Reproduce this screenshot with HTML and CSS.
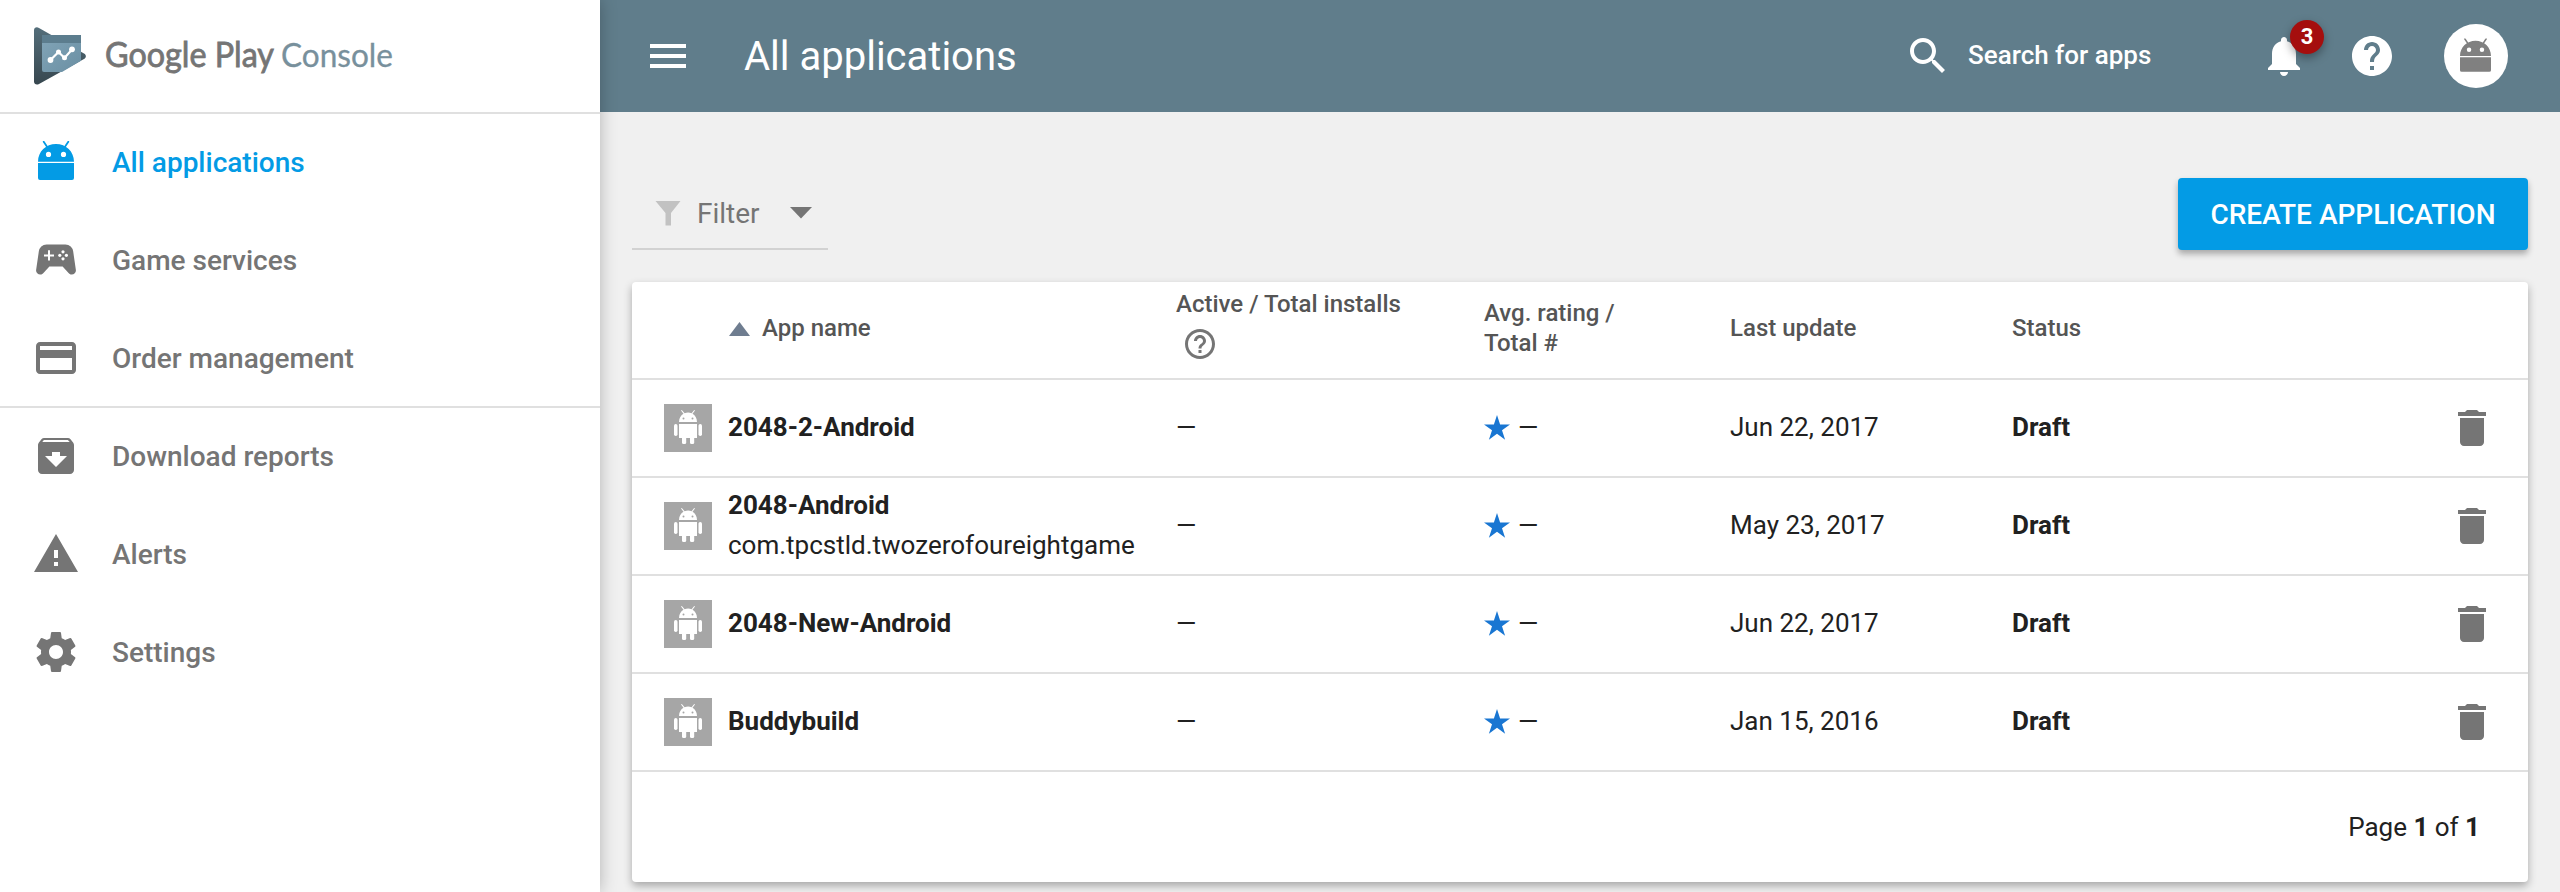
FILE: index.html
```html
<!DOCTYPE html>
<html lang="en">
<head>
<meta charset="utf-8">
<title>All applications - Google Play Console</title>
<link rel="stylesheet" href="styles.css">
</head>
<body>
<svg class="sprite" aria-hidden="true">
  <symbol id="i-trash" viewBox="0 0 24 24"><path d="M6 19c0 1.1.9 2 2 2h8c1.1 0 2-.9 2-2V7H6v12zM19 4h-3.5l-1-1h-5l-1 1H5v2h14V4z"/></symbol>
  <symbol id="i-star" viewBox="0 0 26 25"><path d="M13 0l3.1 9.4H26l-8 5.8 3.1 9.6-8.1-6-8.1 6L8 15.200 0 9.400h9.900z"/></symbol>
  <symbol id="i-head" viewBox="0 0 36 40"><path class="antenna" d="M5.700.8l4 6M30.300.8l-4 6"/><path fill-rule="evenodd" d="M0 20.700C0 10.500 8 3 18 3s18 7.500 18 17.700zM10.500 10.800a2.600 2.600 0 1 0 0 5.200 2.600 2.600 0 0 0 0-5.200zm15 0a2.600 2.600 0 1 0 0 5.200 2.600 2.600 0 0 0 0-5.200zM0 22h36v15a2 2 0 0 1-2 2H2a2 2 0 0 1-2-2z"/></symbol>
  <symbol id="i-robot" viewBox="0 0 48 48"><path d="M15 18c0-4 2-6.800 4.500-8.200L17 6.500l.8-.5 2.800 3.200a10 10 0 0 1 7 0L30.200 6l.8.5-2.500 3.300C31 11.200 33 14 33 18zM15 20h18v14H15z"/><rect x="10" y="20" width="3.500" height="12" rx="1.700"/><rect x="34.500" y="20" width="3.500" height="12" rx="1.700"/><rect x="18" y="32" width="4.200" height="8" rx="1.500"/><rect x="26" y="32" width="4.200" height="8" rx="1.500"/><circle class="robot-eye" cx="19.500" cy="14.500" r="1"/><circle class="robot-eye" cx="28.500" cy="14.500" r="1"/></symbol>
</svg>
<div class="app">
  <aside class="sidebar">
    <div class="brand">
      <svg class="brand-logo" viewBox="0 0 52 58">
        <defs>
          <linearGradient id="lg1" x1="0" y1="0" x2="0" y2="1"><stop offset="0" stop-color="#546e7a"/><stop offset="1" stop-color="#37474f"/></linearGradient>
          <linearGradient id="lg2" x1="0" y1="0" x2="1" y2="1"><stop offset="0" stop-color="#82a5b8"/><stop offset="1" stop-color="#6a8fa3"/></linearGradient>
        </defs>
        <path fill="url(#lg1)" d="M0 3.500C0 .8 2.500-.6 5 1l45 25.500c2.500 1.500 2.500 4 0 5.500L5 57c-2.500 1.500-5 0-5-2.500z"/>
        <path fill="url(#lg2)" d="M8 8h39v25.700L28 45H10a2 2 0 0 1-2-2z"/>
        <path fill="#5c7d8e" d="M8 8h39v8H8z"/>
        <path fill="none" stroke="#fff" stroke-width="2.200" d="M16.500 33l8-8 6 6 7.500-8.500"/>
        <g fill="#fff"><circle cx="16.500" cy="33" r="2.900"/><circle cx="24.500" cy="25" r="2.500"/><circle cx="30.500" cy="30.800" r="2.500"/><circle cx="38" cy="22.300" r="2.900"/></g>
      </svg>
      <svg class="brand-name" viewBox="0 0 300 48">
        <text class="brand-google" x="0" y="35" textLength="169" lengthAdjust="spacingAndGlyphs">Google Play</text>
        <text class="brand-console" x="176" y="35" textLength="112" lengthAdjust="spacingAndGlyphs">Console</text>
      </svg>
    </div>
    <nav class="nav">
      <a class="nav-item nav-active"><span class="icon"><svg class="head-icon" viewBox="0 0 36 40"><use href="#i-head"/></svg></span>All applications</a>
      <a class="nav-item"><svg class="icon" viewBox="0 0 24 24"><path d="M21.960 17.100 20.600 7.800A3.900 3.900 0 0 0 16.700 4.200H7.300A3.900 3.900 0 0 0 3.400 7.800L2.040 17.100A2.100 2.100 0 0 0 4.200 19.300c.6 0 1-.3 1.400-.7L8.700 15.200h6.600l3.100 3.400c.4.4.8.7 1.400.7a2.100 2.100 0 0 0 2.160-2.200z"/><path fill="#fff" d="M11 10.200H9v2.100H8v-2.100H6v-1h2V7.100h1v2.100h2z"/><g fill="#fff"><circle cx="15.500" cy="7.900" r=".8"/><circle cx="15.500" cy="11.400" r=".8"/><circle cx="13.900" cy="9.650" r=".8"/><circle cx="17.200" cy="9.650" r=".8"/></g></svg>Game services</a>
      <a class="nav-item nav-divided"><svg class="icon" viewBox="0 0 24 24"><path d="M20 4H4c-1.110 0-1.990.89-1.990 2L2 18c0 1.110.89 2 2 2h16c1.110 0 2-.89 2-2V6c0-1.110-.89-2-2-2zm0 14H4v-6h16v6zm0-10H4V6h16v2z"/></svg>Order management</a>
      <a class="nav-item"><svg class="icon" viewBox="0 0 24 24"><path d="M20.540 5.230l-1.390-1.680C18.880 3.210 18.470 3 18 3H6c-.47 0-.88.21-1.160.55L3.460 5.230C3.170 5.570 3 6.020 3 6.500V19c0 1.100.9 2 2 2h14c1.100 0 2-.9 2-2V6.500c0-.48-.17-.93-.46-1.270zM12 17.500L6.500 12H10v-2h4v2h3.500L12 17.500zM5.120 5l.81-1h12l.94 1H5.120z"/></svg>Download reports</a>
      <a class="nav-item"><svg class="icon" viewBox="0 0 24 24"><path d="M1 21h22L12 2 1 21zm12-3h-2v-2h2v2zm0-4h-2v-4h2v4z"/></svg>Alerts</a>
      <a class="nav-item"><svg class="icon" viewBox="0 0 24 24"><path d="M19.430 12.980c.04-.32.07-.64.07-.98s-.03-.66-.07-.98l2.110-1.650c.19-.15.24-.42.12-.64l-2-3.460c-.12-.22-.39-.3-.61-.22l-2.490 1c-.52-.4-1.080-.73-1.690-.98l-.38-2.650C14.460 2.180 14.250 2 14 2h-4c-.25 0-.46.18-.49.42l-.38 2.650c-.61.25-1.170.59-1.690.98l-2.490-1c-.23-.09-.49 0-.61.22l-2 3.460c-.13.22-.07.49.12.64l2.110 1.650c-.04.32-.07.65-.07.98s.03.66.07.98l-2.110 1.650c-.19.15-.24.42-.12.64l2 3.460c.12.22.39.3.61.22l2.490-1c.52.4 1.080.73 1.690.98l.38 2.650c.03.24.24.42.49.42h4c.25 0 .46-.18.49-.42l.38-2.650c.61-.25 1.170-.59 1.690-.98l2.490 1c.23.09.49 0 .61-.22l2-3.460c.12-.22.07-.49-.12-.64l-2.110-1.650zM12 15.500c-1.930 0-3.500-1.570-3.500-3.500s1.570-3.500 3.500-3.500 3.500 1.570 3.500 3.500-1.570 3.500-3.500 3.500z"/></svg>Settings</a>
    </nav>
  </aside>
  <main class="main">
    <header class="topbar">
      <svg class="icon menu" viewBox="0 0 24 24"><path d="M3 18h18v-2H3v2zm0-5h18v-2H3v2zm0-7v2h18V6H3z"/></svg>
      <h1 class="title">All applications</h1>
      <div class="search">
        <svg class="icon" viewBox="0 0 24 24"><path d="M15.500 14h-.79l-.28-.27C15.410 12.590 16 11.110 16 9.500 16 5.910 13.090 3 9.500 3S3 5.910 3 9.500 5.910 16 9.500 16c1.610 0 3.090-.59 4.230-1.570l.27.28v.79l5 4.990L20.490 19l-4.990-5zm-6 0C7.010 14 5 11.990 5 9.500S7.010 5 9.500 5 14 7.010 14 9.500 11.990 14 9.500 14z"/></svg>
        <span class="search-label">Search for apps</span>
      </div>
      <div class="bell">
        <svg class="icon" viewBox="0 0 24 24"><path d="M12 22c1.100 0 2-.9 2-2h-4c0 1.100.89 2 2 2zm6-6v-5c0-3.070-1.640-5.640-4.500-6.320V4c0-.83-.67-1.500-1.500-1.500s-1.500.67-1.500 1.500v.68C7.630 5.360 6 7.920 6 11v5l-2 2v1h16v-1l-2-2z"/></svg>
        <span class="badge">3</span>
      </div>
      <svg class="icon help" viewBox="0 0 24 24"><path d="M12 2C6.480 2 2 6.480 2 12s4.480 10 10 10 10-4.480 10-10S17.520 2 12 2zm1 17h-2v-2h2v2zm2.070-7.750l-.9.920C13.450 12.900 13 13.500 13 15h-2v-.5c0-1.100.45-2.100 1.170-2.830l1.240-1.260c.37-.36.59-.86.59-1.410 0-1.100-.9-2-2-2s-2 .9-2 2H8c0-2.210 1.790-4 4-4s4 1.790 4 4c0 .88-.36 1.680-.93 2.250z"/></svg>
      <span class="avatar"><svg class="avatar-icon" viewBox="0 0 36 40"><use href="#i-head"/></svg></span>
    </header>
    <section class="content">
      <div class="toolbar">
        <div class="filter">
          <svg class="funnel" viewBox="0 0 26 26"><path d="M.5 1h25L16 13v12.500h-5.500V13z"/></svg>
          <span>Filter</span>
          <svg class="caret" viewBox="0 0 22 12"><path d="M0 0h22L11 11.500z"/></svg>
        </div>
        <button class="create">CREATE APPLICATION</button>
      </div>
      <div class="card">
        <div class="row head">
          <div class="cell c-name"><svg class="sort" viewBox="0 0 22 14"><path d="M1 14h21L11.500 0z"/></svg>App name</div>
          <div class="cell installs-head"><span>Active / Total installs</span>
            <svg class="help-outline" viewBox="0 0 24 24"><path d="M11 18h2v-2h-2v2zm1-16C6.480 2 2 6.480 2 12s4.480 10 10 10 10-4.480 10-10S17.520 2 12 2zm0 18c-4.410 0-8-3.590-8-8s3.590-8 8-8 8 3.590 8 8-3.590 8-8 8zm0-14c-2.210 0-4 1.790-4 4h2c0-1.100.9-2 2-2s2 .9 2 2c0 2-3 1.750-3 5h2c0-2.250 3-2.500 3-5 0-2.210-1.790-4-4-4z"/></svg>
          </div>
          <div class="cell">Avg. rating /<br>Total #</div>
          <div class="cell">Last update</div>
          <div class="cell">Status</div>
        </div>
        <div class="row">
          <div class="thumb"><svg viewBox="0 0 48 48"><use href="#i-robot"/></svg></div>
          <div class="cell name"><b>2048-2-Android</b></div>
          <div class="cell">—</div>
          <div class="cell rating"><svg class="star"><use href="#i-star"/></svg>—</div>
          <div class="cell">Jun 22, 2017</div>
          <div class="cell"><b>Draft</b></div>
          <svg class="icon trash"><use href="#i-trash"/></svg>
        </div>
        <div class="row">
          <div class="thumb"><svg viewBox="0 0 48 48"><use href="#i-robot"/></svg></div>
          <div class="cell name"><b>2048-Android</b><span>com.tpcstld.twozerofoureightgame</span></div>
          <div class="cell">—</div>
          <div class="cell rating"><svg class="star"><use href="#i-star"/></svg>—</div>
          <div class="cell">May 23, 2017</div>
          <div class="cell"><b>Draft</b></div>
          <svg class="icon trash"><use href="#i-trash"/></svg>
        </div>
        <div class="row">
          <div class="thumb"><svg viewBox="0 0 48 48"><use href="#i-robot"/></svg></div>
          <div class="cell name"><b>2048-New-Android</b></div>
          <div class="cell">—</div>
          <div class="cell rating"><svg class="star"><use href="#i-star"/></svg>—</div>
          <div class="cell">Jun 22, 2017</div>
          <div class="cell"><b>Draft</b></div>
          <svg class="icon trash"><use href="#i-trash"/></svg>
        </div>
        <div class="row">
          <div class="thumb"><svg viewBox="0 0 48 48"><use href="#i-robot"/></svg></div>
          <div class="cell name"><b>Buddybuild</b></div>
          <div class="cell">—</div>
          <div class="cell rating"><svg class="star"><use href="#i-star"/></svg>—</div>
          <div class="cell">Jan 15, 2016</div>
          <div class="cell"><b>Draft</b></div>
          <svg class="icon trash"><use href="#i-trash"/></svg>
        </div>
        <div class="pager"><span>Page <b>1</b> of <b>1</b></span></div>
      </div>
    </section>
  </main>
</div>
</body>
</html>
```
FILE: styles.css
```css
* { box-sizing: border-box; }
body {
  margin: 0;
  font-family: Roboto, "Liberation Sans", sans-serif;
  font-size: 26px;
  color: #212121;
  background: #f0f0f0;
}
svg { display: block; fill: currentColor; }
b { font-weight: 700; }
.sprite { position: absolute; width: 0; height: 0; }
.icon { width: 48px; height: 48px; flex: none; }
.antenna { fill: none; stroke: currentColor; stroke-width: 1.8px; stroke-linecap: round; }
.app { display: flex; height: 892px; overflow: hidden; }

.sidebar {
  position: relative;
  z-index: 1;
  width: 600px;
  flex: none;
  background: #fff;
  box-shadow: 0 0 16px rgba(0, 0, 0, .26);
}
.brand {
  display: flex;
  align-items: center;
  height: 114px;
  padding-left: 34px;
  border-bottom: 2px solid #e0e0e0;
}
.brand-logo { width: 52px; height: 58px; }
.brand-name { width: 300px; height: 48px; margin-left: 19px; }
.brand-google, .brand-console { font-family: Lato, sans-serif; }
.brand-google { font-size: 34px; fill: #757575; stroke: #757575; stroke-width: .8px; }
.brand-console { font-size: 32px; fill: #78909c; stroke: #78909c; stroke-width: .3px; }
.nav-item {
  display: flex;
  align-items: center;
  gap: 32px;
  height: 98px;
  padding-left: 32px;
  border-bottom: 2px solid transparent;
  font-size: 28px;
  font-weight: 500;
  color: #757575;
}
.nav-active { color: #039be5; }
.nav-divided { border-bottom-color: #e0e0e0; }
.head-icon { width: 36px; height: 40px; margin: 3px 6px; overflow: visible; }

.main { flex: 1; min-width: 0; }
.topbar {
  display: flex;
  align-items: center;
  height: 112px;
  padding: 0 52px 0 44px;
  background: #607d8b;
  color: #fff;
}
.menu { margin-left: -3px; margin-right: 3px; }
.menu { margin: 0; }
.title { flex: 1; margin: 0 0 0 52px; font-size: 40px; font-weight: 400; }
.search { display: flex; align-items: center; gap: 16px; width: 356px; font-weight: 500; }
.search-label { padding-bottom: 2px; }
.bell { position: relative; }
.badge {
  position: absolute;
  left: 30px;
  top: -12px;
  width: 34px;
  height: 34px;
  border-radius: 50%;
  background: #a50e0e;
  box-shadow: 0 4px 10px rgba(0, 0, 0, .35);
  font-size: 22px;
  font-weight: 700;
  line-height: 34px;
  text-align: center;
}
.help { margin-left: 40px; }
.avatar {
  display: flex;
  align-items: center;
  justify-content: center;
  width: 64px;
  height: 64px;
  padding: 0 2px 1px 0;
  margin-left: 48px;
  border-radius: 50%;
  background: #fff;
  color: #808080;
}
.avatar-icon { width: 31px; height: 35px; overflow: visible; }

.content { padding: 66px 32px 0; }
.toolbar { display: flex; justify-content: space-between; }
.filter {
  display: flex;
  align-items: center;
  width: 196px;
  height: 72px;
  padding-left: 23px;
  border-bottom: 2px solid #d2d2d2;
  font-size: 28px;
  color: #757575;
}
.funnel { width: 26px; height: 26px; margin-right: 16px; color: #c2c2c2; }
.caret { width: 22px; height: 12px; margin-left: 30px; }
.create {
  width: 350px;
  height: 72px;
  padding: 0;
  border: 0;
  border-radius: 4px;
  background: #039be5;
  box-shadow: 0 4px 6px rgba(0, 0, 0, .3);
  font: 500 28px Roboto, sans-serif;
  color: #fff;
}
.card {
  height: 600px;
  margin-top: 32px;
  border-radius: 4px;
  background: #fff;
  box-shadow: 0 4px 8px rgba(0, 0, 0, .3);
}
.row {
  display: grid;
  grid-template-columns: 64px 448px 308px 246px 282px 436px 48px;
  align-items: center;
  height: 98px;
  padding-left: 32px;
  border-bottom: 2px solid #e0e0e0;
}
.cell { padding-bottom: 2px; }
.head { font-size: 24px; font-weight: 500; line-height: 30px; color: #555; }
.head .cell { padding-bottom: 4px; }
.c-name { display: flex; align-items: center; grid-column: 2; }
.sort { width: 22px; height: 14px; margin-right: 12px; margin-top: 2px; color: #6f7d90; }
.installs-head { align-self: start; padding-top: 7px; }
.help-outline { width: 36px; height: 36px; margin: 7px 0 0 6px; color: #757575; }
.thumb { width: 48px; height: 48px; background: #a6a6a6; color: #fff; }
.robot-eye { fill: #a6a6a6; }
.name { line-height: 40px; }
.name span { display: block; }
.rating { display: flex; align-items: center; gap: 8px; }
.star { width: 26px; height: 25px; color: #1976d2; }
.trash { color: #757575; }
.pager { display: flex; align-items: center; justify-content: flex-end; height: 110px; padding-right: 48px; }
```
